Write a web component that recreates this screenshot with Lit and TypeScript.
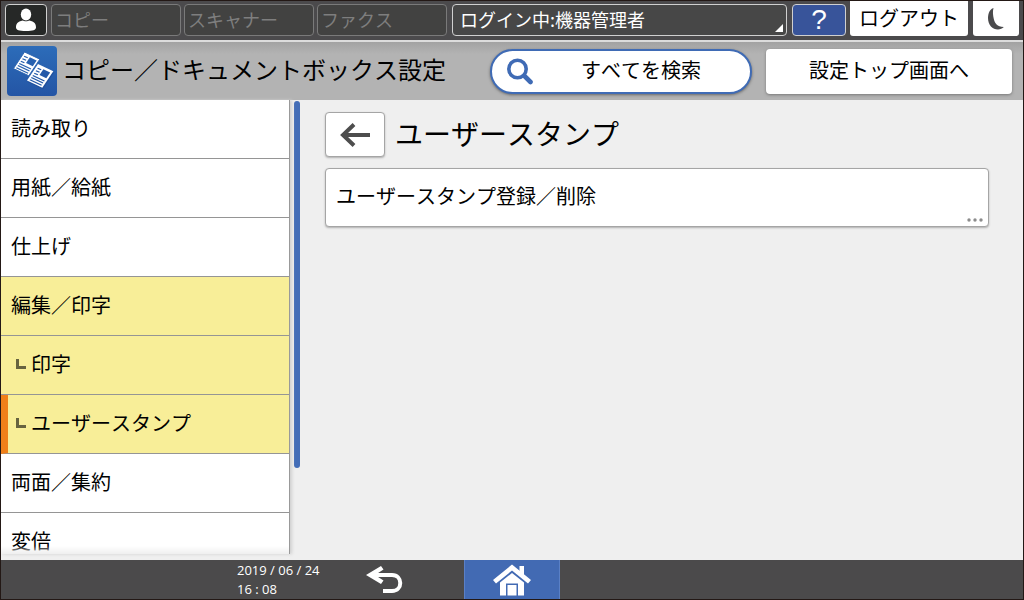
import { LitElement, html, css, nothing } from "lit";
import { customElement, state } from "lit/decorators.js";
import { classMap } from "lit/directives/class-map.js";

interface MenuItem {
  id: string;
  label: string;
  child?: boolean;
  open?: boolean;
}

const APPS = ["コピー", "スキャナー", "ファクス"];

const MENU: MenuItem[] = [
  { id: "scan", label: "読み取り" },
  { id: "paper", label: "用紙／給紙" },
  { id: "finish", label: "仕上げ" },
  { id: "edit", label: "編集／印字", open: true },
  { id: "print", label: "印字", child: true, open: true },
  { id: "stamp", label: "ユーザースタンプ", child: true, open: true },
  { id: "duplex", label: "両面／集約" },
  { id: "zoom", label: "変倍" },
];

@customElement("status-bar")
export class StatusBar extends LitElement {
  static styles = css`
    :host {
      display: flex;
      flex: none;
      align-items: flex-start;
      height: 39px;
      padding: 0 4px;
      background: #4b4a4c;
      border-bottom: 2px solid #dcdcdc;
    }
    button {
      box-sizing: border-box;
      margin: 0;
      font: inherit;
      font-kerning: none;
      line-height: 24px;
      cursor: pointer;
    }
    svg {
      display: block;
    }
    .user,
    .app,
    .login,
    .help {
      height: 32px;
      margin-top: 3px;
      border: 1px solid #d0d0d0;
      border-radius: 4px;
    }
    .user {
      width: 42px;
      padding: 0 10px;
      background: #262827;
    }
    .apps {
      display: flex;
      gap: 3px;
      margin: 0 5px 0 4px;
    }
    .app {
      width: 130px;
      padding: 0 0 2px 3px;
      text-align: left;
      font-size: 18px;
      color: #7e7e7e;
      background: #424241;
      border-color: #7a7a7a;
    }
    .login {
      position: relative;
      flex: 1;
      padding: 0 0 2px 7px;
      text-align: left;
      font-size: 18px;
      color: #fff;
      background: #474747;
    }
    .corner {
      position: absolute;
      right: 3px;
      bottom: 3px;
    }
    .help {
      width: 54px;
      margin-left: 5px;
      padding: 0;
      font-family: "Liberation Sans", Arial, sans-serif;
      font-size: 28px;
      color: #fff;
      background: #38549a;
    }
    .logout,
    .sleep {
      height: 35px;
      padding: 0 0 2px;
      color: #000;
      background: #fff;
      border: 0;
      border-radius: 0 0 3px 3px;
    }
    .logout {
      width: 118px;
      margin: 0 5px 0 4px;
      font-size: 20px;
    }
    .sleep {
      width: 46px;
      padding: 0 11px;
    }
  `;

  render() {
    return html`
      <button class="user" aria-label="ユーザー">
        <svg width="20" height="24" viewBox="0 0 20 24" fill="#fff">
          <ellipse cx="10" cy="6.500" rx="5.200" ry="6" />
          <path d="M6.800 12.500C7.800 13.600 12.200 13.600 13.200 12.500C18.500 13.500 20 16 20 19.500C20 22 17 23 10 23S0 22 0 19.500C0 16 1.500 13.500 6.800 12.500Z" />
        </svg>
      </button>
      <div class="apps">
        ${APPS.map((name) => html`<button class="app" disabled>${name}</button>`)}
      </div>
      <button class="login">
        ログイン中:機器管理者
        <svg class="corner" width="8" height="8" viewBox="0 0 8 8"><path d="M8 0V8H0Z" fill="#fff" /></svg>
      </button>
      <button class="help" aria-label="ヘルプ">?</button>
      <button class="logout">ログアウト</button>
      <button class="sleep" aria-label="省エネ">
        <svg width="24" height="24" viewBox="0 0 24 24">
          <path d="M9.500 1C4.500 2.500 4 9 4 11C4 18 8.500 22.500 14 22.500C16 22.500 18.500 21.500 19.800 20C13 20 10.800 16 9.800 12C9 8.500 8.500 4.500 9.500 1Z" fill="#4a4a4c" />
        </svg>
      </button>
    `;
  }
}

@customElement("settings-header")
export class SettingsHeader extends LitElement {
  static styles = css`
    :host {
      display: flex;
      flex: none;
      align-items: center;
      box-sizing: border-box;
      height: 58px;
      padding: 0 11px 0 6px;
      background: linear-gradient(#a2a2a2, #b3b3b3 12px);
    }
    svg {
      display: block;
      flex: none;
    }
    .title {
      flex: 1;
      margin: 0 0 4px 5px;
      font-size: 24px;
      font-weight: 400;
      line-height: 32px;
      white-space: nowrap;
    }
    button {
      box-sizing: border-box;
      height: 45px;
      margin: 0;
      font: inherit;
      font-kerning: none;
      font-size: 20px;
      line-height: 28px;
      color: #000;
      background: #fff;
      cursor: pointer;
    }
    .search {
      display: flex;
      align-items: center;
      width: 262px;
      padding: 0 49px 0 13px;
      border: 2px solid #3f6bb5;
      border-radius: 23px;
      box-shadow: 0 1px 3px #666;
    }
    .label {
      flex: 1;
      padding-bottom: 2px;
      text-align: right;
    }
    .top {
      width: 246px;
      margin-left: 14px;
      padding: 0 0 2px;
      border: 0;
      border-radius: 4px;
      box-shadow: 0 1px 3px #777;
    }
  `;

  render() {
    return html`
      <svg width="50" height="50" viewBox="0 0 50 50">
        <defs>
          <linearGradient id="tile" x1="0" y1="0" x2="0" y2="1">
            <stop offset="0" stop-color="#2c6cb9" />
            <stop offset="1" stop-color="#2455a5" />
          </linearGradient>
        </defs>
        <rect width="50" height="50" rx="4" fill="url(#tile)" />
        <g transform="matrix(0.900 0.420 -0.550 0.830 31 18)">
          <rect x="1.500" y="1" width="17" height="20" fill="#1d4a94" opacity="0.600" />
          <rect width="17" height="20" fill="#fff" />
          <rect x="7.500" y="2.500" width="7.500" height="7" fill="#2459a8" />
          <path d="M2 4H6M2 7H6M2 10H6M2 12.800H15M2 15.400H15M2 18H15" stroke="#2459a8" stroke-width="1.200" />
        </g>
        <g transform="matrix(0.900 0.420 -0.550 0.830 17.500 6)">
          <rect width="17" height="20" fill="#fff" stroke="#2861af" stroke-width="0.800" />
          <rect x="7.500" y="2.500" width="7.500" height="7" fill="#2861af" />
          <path d="M2 4H6M2 7H6M2 10H6M2 12.800H15M2 15.400H15M2 18H15" stroke="#2861af" stroke-width="1.200" />
        </g>
      </svg>
      <h1 class="title">コピー／ドキュメントボックス設定</h1>
      <button class="search">
        <svg width="30" height="28" viewBox="0 0 30 28" fill="none" stroke="#3f6bb5">
          <circle cx="12.500" cy="12" r="8.700" stroke-width="3.600" />
          <path d="M19.500 19L25.500 25" stroke-width="4.600" stroke-linecap="round" />
        </svg>
        <span class="label">すべてを検索</span>
      </button>
      <button class="top">設定トップ画面へ</button>
    `;
  }
}

@customElement("side-menu")
export class SideMenu extends LitElement {
  @state() private selected = "stamp";

  static styles = css`
    :host {
      display: flex;
      flex: none;
      min-height: 0;
    }
    .menu {
      position: relative;
      width: 288px;
      margin-bottom: 6px;
      overflow: hidden;
      background: #fff;
      border-right: 1px solid #999;
      box-shadow: 2px 0 3px #d0d0d0;
    }
    .menu::after {
      content: "";
      position: absolute;
      inset: auto 0 0;
      height: 8px;
      background: linear-gradient(#efefef00, #efefef);
    }
    .list {
      margin: 0;
      padding: 0;
      list-style: none;
    }
    .item {
      display: flex;
      align-items: center;
      box-sizing: border-box;
      height: 59px;
      padding: 0 10px 3px;
      border-bottom: 1px solid #959595;
      font-size: 20px;
      line-height: 28px;
      color: #000;
      text-decoration: none;
    }
    .open {
      background: #f8ee98;
    }
    .child {
      padding-left: 15px;
    }
    .current {
      padding-left: 8px;
      border-left: 7px solid #f08019;
      border-bottom-color: #959595;
    }
    .branch {
      flex: none;
      margin-right: 5px;
    }
    .track {
      width: 6px;
      padding: 1px 0 0 4px;
    }
    .thumb {
      height: 80%;
      border-radius: 3px;
      background: #436db7;
    }
  `;

  private select(e: Event, id: string) {
    e.preventDefault();
    this.selected = id;
  }

  render() {
    return html`
      <nav class="menu">
        <ul class="list">
          ${MENU.map(
            (m) => html`<li>
              <a
                href="#${m.id}"
                class=${classMap({
                  item: true,
                  open: !!m.open,
                  child: !!m.child,
                  current: m.id === this.selected,
                })}
                @click=${(e: Event) => this.select(e, m.id)}
                >${m.child
                  ? html`<svg class="branch" width="10" height="10" viewBox="0 0 10 10"><path d="M1.500 0V8.500H10" fill="none" stroke="#67633f" stroke-width="3" /></svg>`
                  : nothing}<span>${m.label}</span></a
              >
            </li>`
          )}
        </ul>
      </nav>
      <div class="track"><div class="thumb"></div></div>
    `;
  }
}

@customElement("nav-bar")
export class NavBar extends LitElement {
  static styles = css`
    :host {
      display: grid;
      flex: none;
      grid-template-columns: 1fr 96px 1fr;
      height: 39px;
      background: #4b4a4b;
    }
    .left {
      display: flex;
      justify-content: flex-end;
      padding-right: 49px;
    }
    .clock {
      display: flex;
      flex-direction: column;
      width: 118px;
      padding-top: 1px;
      font-family: "Open Sans", "Noto Sans", sans-serif;
      font-size: 13px;
      line-height: 19px;
      color: #fff;
      white-space: nowrap;
    }
    button {
      display: flex;
      align-items: center;
      justify-content: center;
      margin: 0;
      padding: 0;
      border: 0;
      background: none;
      cursor: pointer;
    }
    .back {
      width: 60px;
    }
    .home {
      box-sizing: border-box;
      background: #426ab3;
      border: solid #5a80c6;
      border-width: 0 1px;
    }
  `;

  render() {
    return html`
      <div class="left">
        <time class="clock" datetime="2019-06-24T16:08">
          <span>2019 / 06 / 24</span>
          <span>16 : 08</span>
        </time>
        <button class="back" aria-label="戻る">
          <svg width="38" height="28" viewBox="0 0 38 28">
            <path d="M8 9H26C37 9 37 25 26 25H17" fill="none" stroke="#fff" stroke-width="4" />
            <path d="M0 9L15 0L17.500 3.500L9 9L17.500 14.500L15 18Z" fill="#fff" />
          </svg>
        </button>
      </div>
      <button class="home" aria-label="ホーム">
        <svg width="38" height="32" viewBox="0 0 38 32" fill="#fff">
          <path d="M26.500 2H31V12L26.500 8Z" />
          <path d="M19 0.500L0 16L3 19.500L19 6.500L35 19.500L38 16Z" />
          <path d="M7 18.500L19 9L31 18.500V31.500H25V19.500H13V31.500H7Z" />
          <rect x="14.500" y="21" width="9" height="10.500" />
        </svg>
      </button>
    `;
  }
}

@customElement("app-root")
export class AppRoot extends LitElement {
  static styles = css`
    :host {
      display: flex;
      flex-direction: column;
      box-sizing: border-box;
      height: 100vh;
      border: 1px solid #231815;
      overflow: hidden;
      background: #efefef;
      color: #000;
      font-family: "Noto Sans CJK JP", sans-serif;
      font-kerning: none;
    }
    .body {
      display: flex;
      flex: 1;
      min-height: 0;
    }
    .content {
      flex: 1;
      padding: 12px 34px 0 25px;
    }
    .heading {
      display: flex;
      align-items: center;
      gap: 10px;
      margin-bottom: 11px;
    }
    .name {
      margin: 0;
      padding-bottom: 3px;
      font-size: 28px;
      font-weight: 400;
      line-height: 36px;
    }
    button {
      box-sizing: border-box;
      margin: 0;
      font: inherit;
      font-kerning: none;
      color: #000;
      background: #fff;
      border: 1px solid #a5a5a5;
      border-radius: 4px;
      box-shadow: 0 1px 2px #b0b0b0;
      cursor: pointer;
    }
    .back {
      display: flex;
      align-items: center;
      justify-content: center;
      width: 60px;
      height: 45px;
      padding: 0;
    }
    .card {
      position: relative;
      width: 100%;
      height: 59px;
      padding: 0 10px 4px;
      text-align: left;
      font-size: 20px;
      line-height: 28px;
    }
    .more {
      position: absolute;
      right: 5px;
      bottom: 4px;
    }
  `;

  render() {
    return html`
      <status-bar></status-bar>
      <settings-header></settings-header>
      <div class="body">
        <side-menu></side-menu>
        <main class="content">
          <div class="heading">
            <button class="back" aria-label="戻る">
              <svg width="30" height="24" viewBox="0 0 30 24" fill="none" stroke="#4d4d4d" stroke-width="4">
                <path d="M3 12H30M14 1.500L3 12L14 22.500" />
              </svg>
            </button>
            <h2 class="name">ユーザースタンプ</h2>
          </div>
          <button class="card">
            ユーザースタンプ登録／削除
            <svg class="more" width="16" height="4" viewBox="0 0 16 4" fill="#8c8c8c">
              <circle cx="2" cy="2" r="1.700" />
              <circle cx="8" cy="2" r="1.700" />
              <circle cx="14" cy="2" r="1.700" />
            </svg>
          </button>
        </main>
      </div>
      <nav-bar></nav-bar>
    `;
  }
}
